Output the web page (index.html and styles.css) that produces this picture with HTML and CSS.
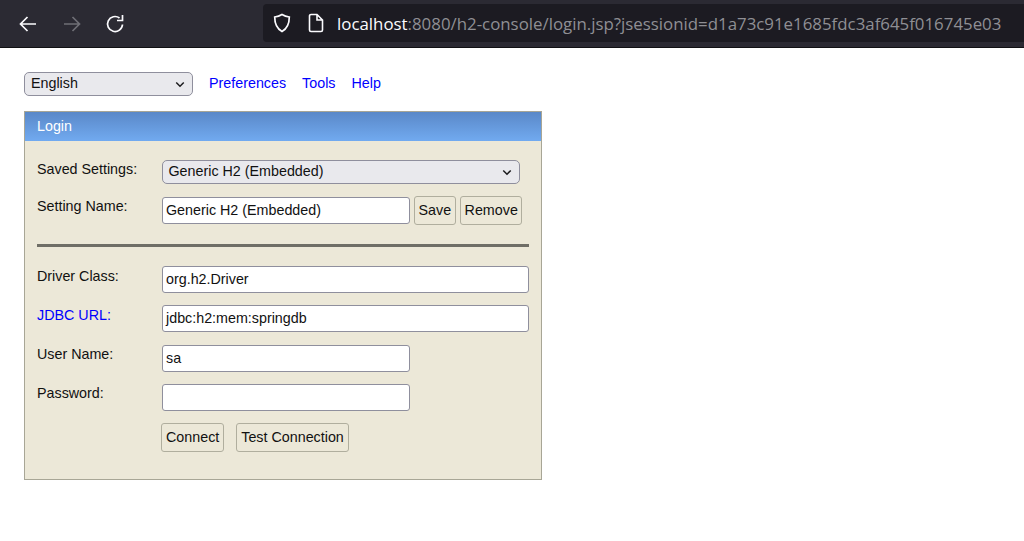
FILE: index.html
```html
<!DOCTYPE html>
<html lang="en">
<head>
<meta charset="utf-8">
<title>H2 Console</title>
<link rel="stylesheet" href="styles.css">
</head>
<body>
<header class="browser">
  <nav class="nav-icons">
    <svg class="icon" viewBox="0 0 20 20"><path d="M18 10H2.500M9.500 3l-7 7 7 7" fill="none" stroke="#fbfbfe" stroke-width="1.700"/></svg>
    <svg class="icon" viewBox="0 0 20 20"><path d="M2 10h15.500M10.500 3l7 7-7 7" fill="none" stroke="#6f6f76" stroke-width="1.700"/></svg>
    <svg class="icon" viewBox="0 0 20 20"><path d="M17.500 10.500A7.500 7.500 0 1 1 14.500 4M17.500 1v5.500H12" fill="none" stroke="#fbfbfe" stroke-width="1.700"/></svg>
  </nav>
  <div class="urlbar">
    <svg class="shield" viewBox="0 0 18 20"><path d="M9 1.500c2.200 1.400 4.600 2.200 7.300 2.500 0 6.500-1.800 11.500-7.300 14.500C3.500 15.500 1.700 10.500 1.700 4 4.400 3.700 6.800 2.900 9 1.500z" fill="none" stroke="#fbfbfe" stroke-width="1.700"/></svg>
    <svg class="page" viewBox="0 0 16 20"><path d="M1.500 3a1.500 1.500 0 0 1 1.500-1.500h6l5.500 5.500v10a1.500 1.500 0 0 1-1.500 1.500H3a1.500 1.500 0 0 1-1.500-1.500zM9 1.500V7h5.500" fill="none" stroke="#fbfbfe" stroke-width="1.600"/></svg>
    <span class="url"><span class="host">localhost</span>:8080/h2-console/login.jsp?jsessionid=d1a73c91e1685fdc3af645f016745e03</span>
  </div>
</header>
<main class="content">
  <div class="toolbar">
    <div class="select lang"><span>English</span><svg class="chev" viewBox="0 0 12 8"><path d="M1.500 1.500 6 6l4.500-4.500" fill="none" stroke="#1c1c1e" stroke-width="1.800"/></svg></div>
    <a href="#">Preferences</a>
    <a href="#">Tools</a>
    <a href="#">Help</a>
  </div>
  <section class="login">
    <h1 class="login-head">Login</h1>
    <div class="login-body">
      <div class="row row-saved">
        <label>Saved Settings:</label>
        <div class="select saved"><span>Generic H2 (Embedded)</span><svg class="chev" viewBox="0 0 12 8"><path d="M1.500 1.500 6 6l4.500-4.500" fill="none" stroke="#1c1c1e" stroke-width="1.800"/></svg></div>
      </div>
      <div class="row row-name">
        <label>Setting Name:</label>
        <div class="field short">Generic H2 (Embedded)</div>
        <button class="btn">Save</button>
        <button class="btn">Remove</button>
      </div>
      <hr class="rule">
      <div class="row">
        <label>Driver Class:</label>
        <div class="field wide">org.h2.Driver</div>
      </div>
      <div class="row row-jdbc">
        <label class="link-label">JDBC URL:</label>
        <div class="field wide">jdbc:h2:mem:springdb</div>
      </div>
      <div class="row row-tight">
        <label>User Name:</label>
        <div class="field short">sa</div>
      </div>
      <div class="row row-tight">
        <label>Password:</label>
        <div class="field short"></div>
      </div>
      <div class="row row-actions">
        <button class="btn">Connect</button>
        <button class="btn">Test Connection</button>
      </div>
    </div>
  </section>
</main>
</body>
</html>
```

FILE: styles.css
```css
* { box-sizing: border-box; }
html, body { margin: 0; padding: 0; }
body {
  width: 1024px;
  height: 541px;
  overflow: hidden;
  background: #fff;
  font-family: "Liberation Sans", Arial, sans-serif;
  font-size: 14.300px;
  color: #111;
}
.browser {
  height: 48px;
  background: #2b2a33;
  border-bottom: 1px solid #111114;
  display: flex;
  align-items: center;
  padding-left: 18px;
}
.nav-icons { display: flex; gap: 23.500px; align-items: center; width: 245px; }
.icon { width: 20px; height: 20px; display: block; }
.urlbar {
  height: 38px;
  width: 761px;
  margin-top: -1px;
  background: #1c1b22;
  border-radius: 4px 0 0 4px;
  display: flex;
  align-items: center;
  padding-left: 10px;
  font-family: "Open Sans", "Noto Sans", sans-serif;
  font-size: 16.850px;
  color: #8f8f94;
  white-space: nowrap;
  overflow: hidden;
}
.shield { width: 18px; height: 20px; flex: none; }
.page { width: 16px; height: 20px; flex: none; margin-left: 17px; }
.url { margin-left: 13px; }
.host { color: #fbfbfe; }
.content { padding: 24px 0 0 24px; }
.toolbar { display: flex; align-items: center; height: 24px; }
.toolbar a { color: #0000ff; text-decoration: none; margin: 0 16px 1px 0; line-height: 17px; }
.select {
  background: #e9e9ed;
  border: 1px solid #8f8f9d;
  border-radius: 5px;
  height: 24px;
  display: flex;
  align-items: center;
  justify-content: space-between;
  padding: 0 5px 2px 6px;
  color: #111;
}
.lang { width: 169px; margin-right: 16px; }
.saved { width: 358px; }
.chev { width: 10px; height: 7px; margin: 2px 2px 0 0; }
.login {
  width: 518px;
  height: 369px;
  margin-top: 15px;
  background: #ece8d8;
  border: 1px solid #a8a696;
}
.login-head {
  margin: 0;
  height: 29px;
  padding-left: 12px;
  line-height: 29px;
  font-size: 14.300px;
  font-weight: normal;
  color: #fff;
  background: linear-gradient(#5a88c8, #71aaf0);
}
.login-body { padding: 19px 12px 0 12px; }
.row { display: flex; align-items: flex-start; height: 27px; margin-bottom: 12px; }
.row label { width: 124.500px; flex: none; padding-top: 2px; line-height: 17px; }
.row-saved { height: 24px; margin-bottom: 13px; }
.row-saved label { padding-top: 1px; }
.row-name { margin-bottom: 0; }
.row-name label { padding-top: 1px; }
.row-jdbc { margin-bottom: 13px; }
.row-tight label { padding-top: 1px; }
.row .link-label { color: #0000ff; }
.field {
  height: 27px;
  background: #fff;
  border: 1px solid #8f8f9d;
  border-radius: 3px;
  padding: 0 3.500px;
  line-height: 24px;
  color: #111;
}
.short { width: 248px; }
.wide { width: 367px; }
.btn {
  height: 29px;
  padding: 0 4px 2px;
  background: #ece8d8;
  border: 1px solid #b0ae9e;
  border-radius: 3px;
  font: inherit;
  color: #111;
  margin-top: -1px;
}
.row-name .btn { margin-left: 4.500px; padding-left: 3.500px; padding-right: 3.500px; }
.row-actions { padding-left: 124px; height: 29px; margin: 0; }
.row-actions .btn { margin: 0 12px 0 0; }
.rule {
  height: 3px;
  margin: 20px 0 19px;
  border: 0;
  background: #6f6e66;
}
```
